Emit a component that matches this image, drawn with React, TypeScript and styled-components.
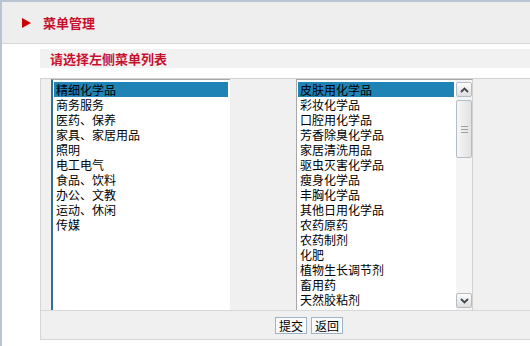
import React, { useState } from "react";
import styled, { createGlobalStyle } from "styled-components";

const GlobalStyle = createGlobalStyle`
	body {
		margin: 0;
		overflow: hidden;
		background: #ffffff;
		font-family: "Noto Sans CJK SC", "DejaVu Sans", sans-serif;
		font-size: 12px;
		color: #000000;
	}
`;

const Page = styled.div`
	width: 530px;
	height: 346px;
	border-top: 2px solid #b8c6d4;
	border-left: 2px solid #b8c6d4;
	box-sizing: border-box;
	overflow: hidden;
`;

const Header = styled.div`
	height: 41px;
	background: #eeeeee;
	border-bottom: 1px solid #d6d6d6;
	display: flex;
	align-items: center;
	padding-left: 20px;
	gap: 12px;
`;

const Arrow = styled.span`
	width: 0;
	height: 0;
	border-top: 5px solid transparent;
	border-bottom: 5px solid transparent;
	border-left: 9px solid #cc0000;
`;

const Title = styled.h1`
	margin: 0;
	font-size: 13px;
	font-weight: bold;
	color: #c8102e;
`;

const Content = styled.div`
	padding-left: 38px;
	width: 535px;
`;

const SubTitle = styled.div`
	margin-top: 5px;
	height: 19px;
	line-height: 19px;
	background: #f1f1f1;
	padding-left: 10px;
	font-size: 13px;
	font-weight: bold;
	color: #c8102e;
`;

const Panel = styled.div`
	margin-top: 10px;
	border-top: 1px solid #d2d2d2;
	border-left: 1px solid #d6d6d6;
	border-bottom: 1px solid #d6d6d6;
	background: #f0f0f0;
`;

const ListsRow = styled.div`
	display: flex;
	padding-left: 10px;
	gap: 66px;
	height: 231px;
`;

const ListBox = styled.div<{ $focused?: boolean; $width: number }>`
	width: ${(p) => p.$width}px;
	height: 231px;
	box-sizing: border-box;
	background: #ffffff;
	border-top: 1px solid #a8a8a8;
	border-left: ${(p) => (p.$focused ? "2px solid #2f6f98" : "1px solid #a8a8a8")};
	border-right: ${(p) => (p.$focused ? "none" : "1px solid #d0d0d0")};
	display: flex;
	overflow: hidden;
`;

const Items = styled.ul`
	flex: 1;
	list-style: none;
	margin: 0;
	padding: 2px 2px 0 1px;
	overflow: hidden;
`;

const Item = styled.li<{ $selected?: boolean }>`
	height: 15px;
	line-height: 15px;
	padding-left: 2px;
	white-space: nowrap;
	background: ${(p) => (p.$selected ? "#1f83b6" : "transparent")};
	cursor: default;
`;

const ScrollBar = styled.div`
	width: 16px;
	display: flex;
	flex-direction: column;
	padding: 2px 0 2px;
	box-sizing: border-box;
	background: #f4f4f4;
`;

const ScrollButton = styled.div`
	height: 15px;
	box-sizing: border-box;
	border: 1px solid #b4bcc6;
	border-radius: 2px;
	background: linear-gradient(#fcfcfc, #dedede);
	display: flex;
	align-items: center;
	justify-content: center;
`;

const Track = styled.div`
	flex: 1;
	padding-top: 3px;
`;

const Thumb = styled.div`
	height: 58px;
	box-sizing: border-box;
	border: 1px solid #b4bcc6;
	border-radius: 2px;
	background: linear-gradient(90deg, #f6f6f6, #e2e2e2);
	display: flex;
	align-items: center;
	justify-content: center;
`;

const Grip = styled.div`
	width: 7px;
	height: 5px;
	border-top: 1px solid #9aa0a8;
	border-bottom: 1px solid #9aa0a8;
	position: relative;
	&::after {
		content: "";
		position: absolute;
		left: 0;
		right: 0;
		top: 2px;
		border-top: 1px solid #9aa0a8;
	}
`;

const ButtonBar = styled.div`
	border-top: 1px solid #d8d8d8;
	height: 28px;
	display: flex;
	align-items: center;
	justify-content: center;
	gap: 4px;
	padding-left: 2px;
`;

const Button = styled.button`
	height: 17px;
	padding: 0 3px;
	font-family: inherit;
	font-size: 12px;
	line-height: 13px;
	background: #fafafa;
	border: 1px solid #9fb4c6;
	color: #000000;
	cursor: pointer;
`;

const leftItems = [
	"精细化学品",
	"商务服务",
	"医药、保养",
	"家具、家居用品",
	"照明",
	"电工电气",
	"食品、饮料",
	"办公、文教",
	"运动、休闲",
	"传媒",
];

const rightItems = [
	"皮肤用化学品",
	"彩妆化学品",
	"口腔用化学品",
	"芳香除臭化学品",
	"家居清洗用品",
	"驱虫灭害化学品",
	"瘦身化学品",
	"丰胸化学品",
	"其他日用化学品",
	"农药原药",
	"农药制剂",
	"化肥",
	"植物生长调节剂",
	"畜用药",
	"天然胶粘剂",
];

const Chevron: React.FC<{ up?: boolean }> = ({ up }) => (
	<svg width="9" height="6" viewBox="0 0 9 6">
		<path
			d={up ? "M1 5 L4.5 1.5 L8 5" : "M1 1 L4.5 4.5 L8 1"}
			fill="none"
			stroke="#404850"
			strokeWidth="1.8"
		/>
	</svg>
);

export default function App() {
	const [left, setLeft] = useState(0);
	const [right, setRight] = useState(0);

	return (
		<>
			<GlobalStyle />
			<Page>
				<Header>
					<Arrow />
					<Title>菜单管理</Title>
				</Header>
				<Content>
					<SubTitle>请选择左侧菜单列表</SubTitle>
					<Panel>
						<ListsRow>
							<ListBox $focused $width={179}>
								<Items>
									{leftItems.map((name, i) => (
										<Item key={name} $selected={i === left} onClick={() => setLeft(i)}>
											{name}
										</Item>
									))}
								</Items>
							</ListBox>
							<ListBox $width={177}>
								<Items>
									{rightItems.map((name, i) => (
										<Item key={name} $selected={i === right} onClick={() => setRight(i)}>
											{name}
										</Item>
									))}
								</Items>
								<ScrollBar>
									<ScrollButton>
										<Chevron up />
									</ScrollButton>
									<Track>
										<Thumb>
											<Grip />
										</Thumb>
									</Track>
									<ScrollButton>
										<Chevron />
									</ScrollButton>
								</ScrollBar>
							</ListBox>
						</ListsRow>
						<ButtonBar>
							<Button>提交</Button>
							<Button>返回</Button>
						</ButtonBar>
					</Panel>
				</Content>
			</Page>
		</>
	);
}
